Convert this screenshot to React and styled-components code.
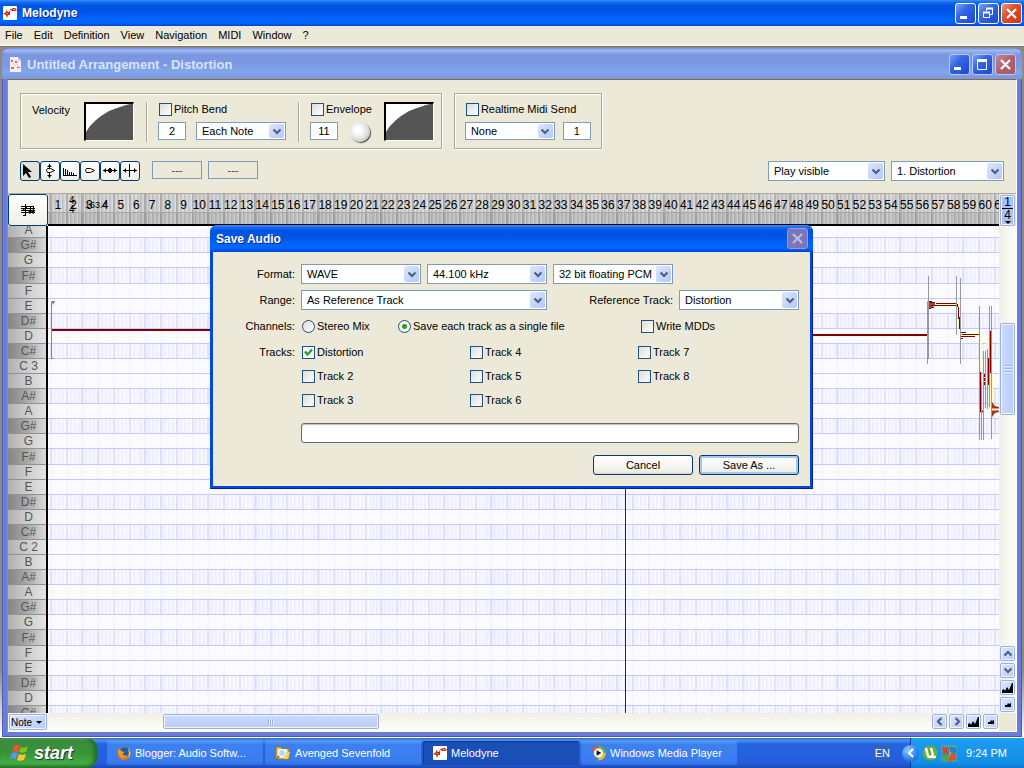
import { useState } from "react";
import styled, { createGlobalStyle, css } from "styled-components";

const NOTES = ["A", "G#", "G", "F#", "F", "E", "D#", "D", "C#", "C 3", "B", "A#", "A", "G#", "G", "F#", "F", "E", "D#", "D", "C#", "C 2", "B", "A#", "A", "G#", "G", "F#", "F", "E", "D#", "D", "C#"];
const BARS = Array.from({ length: 61 }, (_, i) => i + 1);
const MENUS = ["File", "Edit", "Definition", "View", "Navigation", "MIDI", "Window", "?"];
const TRACKS = ["Distortion", "Track 2", "Track 3", "Track 4", "Track 5", "Track 6", "Track 7", "Track 8"];

const MelodyneIcon = () => (
  <svg width="14" height="14" viewBox="0 0 14 14" aria-hidden="true">
    <rect width="14" height="14" rx="1" fill="#fff" />
    <path d="M0 8l3-2V4l2 2h2v3H5l-1 3-1-3z" fill="#c42a12" />
    <path d="M2 8l3-1v1H2z" fill="#f7c04a" />
    <path d="M6 6l2-3h1" stroke="#777" fill="none" />
    <path d="M8 4l2-2h2l2 2-2 1H9z" fill="#c42a12" />
    <path d="M10 3h2v1h-2z" fill="#f7c04a" />
  </svg>
);

const ArrangementIcon = () => (
  <svg width="13" height="17" viewBox="0 0 13 17" aria-hidden="true">
    <path d="M1 1h8l3 4v11H1z" fill="#f6edf2" />
    <path d="M9 1v4h3" fill="#d5cfe6" />
    <path d="M2 4h2v2H2zM6 5h2v2H6zM2 11h3v2H2zM8 11h3v1H8z" fill="#e0664e" />
    <path d="M4 7l2 3M8 8l1 2" stroke="#f0b8b0" />
  </svg>
);

const WindowIcon = ({ kind }) => (
  <svg width="19" height="19" viewBox="0 0 19 19" fill="none" stroke="#fff" aria-hidden="true">
    {kind === "min" && <path d="M4 13.500h7" strokeWidth="3" />}
    {kind === "max" && (
      <>
        <path d="M4.500 5v9.500h9V5" />
        <path d="M4 5.500h10" strokeWidth="3" />
      </>
    )}
    {kind === "restore" && (
      <>
        <path d="M4.500 8v5.500h6V8M7.500 7V5M13.500 5v5.500H11" />
        <path d="M4 8.500h7M7 4.500h7" strokeWidth="2" />
      </>
    )}
    {kind === "close" && <path d="M5 5l9 9M14 5l-9 9" strokeWidth="2.200" />}
  </svg>
);

const Chevron = ({ dir = "down" }) => {
  const paths = {
    down: "M1.500 2.500l3.500 3.500 3.500-3.500",
    up: "M1.500 6.500L5 3l3.500 3.500",
    left: "M6.500 1L3 4.500 6.500 8",
    right: "M3.500 1L7 4.500 3.500 8",
  };
  return (
    <svg width="10" height="9" viewBox="0 0 10 9" fill="none" stroke="#4d6185" strokeWidth="2.200" aria-hidden="true">
      <path d={paths[dir]} />
    </svg>
  );
};

const Mountain = ({ small }) => (
  <svg width="12" height="12" viewBox="0 0 12 12" aria-hidden="true">
    <path d={small ? "M3 8V6l2 0 1-2 1 1 2-1v4z" : "M0 11V8l2-1 1 2 2-4 2 3 3-7h1v10z"} fill="#000" />
  </svg>
);

const CurveIcon = () => (
  <svg width="48" height="37" viewBox="0 0 48 37" aria-hidden="true">
    <path d="M0 37V28l4-6 6-6 5-4 8-5 8-3 9-3 4-1h4v37z" fill="#555" />
  </svg>
);

const TOOLS = [
  { name: "Select", art: <path d="M3 3v12l3-3 3 5 2-1-3-5h4z" fill="#000" stroke="none" /> },
  { name: "Pitch", art: <path d="M9.500 3v4M9.500 12v5M7.500 5.500h4M7.500 14.500h4M8.500 4.500h2M8.500 15.500h2M7.500 7.500h3l4 2-4 2h-3l-1-2z" /> },
  { name: "Formant", art: <path d="M3 14.500h14M3.500 14V7M5.500 14V8M7.500 14V9M9.500 14v-3M11.500 14v-3M13.500 14v-2" /> },
  { name: "Amplitude", art: <path d="M6.500 7.500h4l4 2-4 2h-4l-1-2z" /> },
  { name: "Timing", art: <path d="M3 9.500h14M5.500 7.500v4M4.500 8.500v2M14.500 7.500v4M15.500 8.500v2M8.500 8v3M9.500 7v5M10.500 7v5M11.500 8v3" /> },
  { name: "Separate", art: <path d="M9.500 3v13M3 9.500h14M5.500 7.500v4M4.500 8.500v2M14.500 7.500v4M15.500 8.500v2" /> },
];

const ScoreIcon = () => (
  <svg width="16" height="16" viewBox="0 0 16 16" fill="none" stroke="#000" aria-hidden="true">
    <path d="M1 4.500h13M1 6.500h14M1 8.500h14M1 10.500h14" />
    <path d="M5.500 2v12M3 13.500h2M3 8l4-3M10.500 5v5M13.500 4v6" />
    <path d="M9 9h2v2H9zM12 9h2v2h-2z" fill="#000" />
  </svg>
);

const ComboBox = ({ label, value, size }) => (
  <Combo $size={size}>
    <select aria-label={label} defaultValue={value}>
      <option>{value}</option>
    </select>
    <ComboArrow>
      <Chevron />
    </ComboArrow>
  </Combo>
);

const Check = ({ children, type = "checkbox", name, checked = false }) => (
  <CheckLabel>
    <CheckInput type={type} name={name} defaultChecked={checked} />
    {children}
  </CheckLabel>
);

const WindowControls = ({ kinds, inactive }) => (
  <Controls>
    {kinds.map((kind) => (
      <ControlButton key={kind} $close={kind === "close"} $inactive={inactive} aria-label={kind}>
        <WindowIcon kind={kind} />
      </ControlButton>
    ))}
  </Controls>
);

const PitchCurve = () => (
  <PitchSvg width="951" height="487" viewBox="48 226 951 487" fill="none" aria-hidden="true">
    <path d="M625.500 226v487" stroke="#900000" />
    <path d="M55 301.500h-3.500v57H54" stroke="#888" />
    <path d="M52 302h3l-2 3z" fill="#888" />
    <path d="M52 330h160M812 335h116" stroke="#800000" strokeWidth="2" />
    <path d="M928 304.500h30l2 22M960 334.500h20M980.500 335v37M988.500 337v22M991.500 376v33h8" stroke="#ffffb8" strokeWidth="3" />
    <path d="M929 301l3 1 3 1v3l-3 1-3 2z" fill="#b04830" />
    <path d="M929 301.500h3M930 302.500h5M936 303.500h20M930 305.500h27M931 307.500h3M929 308.500h2" stroke="#800000" />
    <path d="M957.500 304v3M958.500 307v12M959.500 317v12" stroke="#800000" />
    <path d="M961 332.500h5M962 334.500h17M961 336.500h14M961 338.500h2" stroke="#800000" />
    <path d="M980.500 372v39M980 411.500h4" stroke="#800000" strokeWidth="1.500" />
    <path d="M984 375.500h5M984 379.500h5M984 383.500h5" stroke="#800000" strokeWidth="3" strokeDasharray="2 1" />
    <path d="M988.500 358v26M990.500 331v42" stroke="#800000" strokeWidth="1.500" />
    <path d="M992 402l3 4 4 1v5l-4 1-3 4z" fill="#a83020" />
    <path d="M992 409.500h7" stroke="#ffffb8" strokeWidth="2" />
    <path
      d="M928.500 276v83M927.500 301v63M956.500 276v59M960.500 278v86M979.500 306v134M981.500 382v58M983.500 351v89M985.500 351v57M987.500 349v60M989.500 306v101M991.500 306v133"
      stroke="#999"
    />
  </PitchSvg>
);

const TrackPanel = () => (
  <Panel>
    <Groups>
      <Group>
        <GroupLabel>Velocity</GroupLabel>
        <CurveBox>
          <CurveIcon />
        </CurveBox>
        <Separator />
        <Stack>
          <Check>Pitch Bend</Check>
          <StackRow>
            <NumberInput aria-label="Bend range" defaultValue="2" />
            <ComboBox label="Bend mode" value="Each Note" size="small" />
          </StackRow>
        </Stack>
        <Separator />
        <Stack>
          <Check>Envelope</Check>
          <StackRow>
            <NumberInput aria-label="Envelope amount" defaultValue="11" />
            <Knob aria-label="Envelope knob" />
          </StackRow>
        </Stack>
        <CurveBox>
          <CurveIcon />
        </CurveBox>
      </Group>
      <Group>
        <Stack>
          <Check>Realtime Midi Send</Check>
          <StackRow $tight>
            <ComboBox label="Midi output" value="None" size="small" />
            <NumberInput aria-label="Midi channel" defaultValue="1" />
          </StackRow>
        </Stack>
      </Group>
    </Groups>
    <ToolRow>
      <Tools>
        {TOOLS.map(({ name, art }, i) => (
          <ToolButton key={name} aria-label={name} $pressed={i === 0}>
            <svg width="20" height="20" viewBox="0 0 20 20" fill="none" stroke="#000" aria-hidden="true">
              {art}
            </svg>
          </ToolButton>
        ))}
      </Tools>
      <ValueInput aria-label="Note pitch" defaultValue="---" disabled />
      <ValueInput aria-label="Note offset" defaultValue="---" disabled />
      <Spacer />
      <ComboBox label="Playback" value="Play visible" size="playback" />
      <ComboBox label="Track" value="1. Distortion" size="track" />
    </ToolRow>
  </Panel>
);

const Editor = () => (
  <EditorGrid>
    <RulerRow>
      <ScoreButton aria-label="Score view">
        <ScoreIcon />
      </ScoreButton>
      <Ruler>
        {BARS.map((bar) => (
          <Bar key={bar}>{bar}</Bar>
        ))}
        <Meter>
          <span>4</span>
          <span>4</span>
        </Meter>
        <Tempo>163.4</Tempo>
      </Ruler>
      <GridButton aria-label="Grid size">
        <span>1</span>
        <span>4</span>
        <TinyArrow />
      </GridButton>
    </RulerRow>
    <RollRow>
      <Keys>
        {NOTES.map((note, i) => (
          <Key key={i} $sharp={note.endsWith("#")} $tall={note === "F#"} $first={i === 0}>
            {note}
          </Key>
        ))}
      </Keys>
      <Roll>
        {NOTES.map((note, i) => (
          <Lane key={i} $sharp={note.endsWith("#")} $tall={note === "F#"} $first={i === 0} />
        ))}
        <PitchCurve />
      </Roll>
      <VerticalBar>
        <VerticalTrack>
          <VerticalThumb />
        </VerticalTrack>
        <ScrollButton aria-label="Scroll up">
          <Chevron dir="up" />
        </ScrollButton>
        <ScrollButton aria-label="Scroll down">
          <Chevron />
        </ScrollButton>
        <ScrollButton aria-label="Zoom in vertically">
          <Mountain />
        </ScrollButton>
        <ScrollButton aria-label="Zoom out vertically">
          <Mountain small />
        </ScrollButton>
      </VerticalBar>
    </RollRow>
    <BottomBar>
      <NoteButton>
        Note
        <TinyArrow />
      </NoteButton>
      <HorizontalTrack>
        <HorizontalThumb />
      </HorizontalTrack>
      <ScrollButton aria-label="Scroll left">
        <Chevron dir="left" />
      </ScrollButton>
      <ScrollButton aria-label="Scroll right">
        <Chevron dir="right" />
      </ScrollButton>
      <ScrollButton aria-label="Zoom in">
        <Mountain />
      </ScrollButton>
      <ScrollButton aria-label="Zoom out">
        <Mountain small />
      </ScrollButton>
      <Corner />
    </BottomBar>
  </EditorGrid>
);

const SaveDialog = ({ onClose }) => (
  <Overlay>
    <Dialog role="dialog" aria-label="Save Audio">
      <DialogTitle>
        <TitleText>Save Audio</TitleText>
        <Controls>
          <ControlButton $disabled aria-label="close" onClick={onClose}>
            <WindowIcon kind="close" />
          </ControlButton>
        </Controls>
      </DialogTitle>
      <DialogBody>
        <FormRow>
          <FormLabel>Format:</FormLabel>
          <Fields>
            <ComboBox label="Format" value="WAVE" size="medium" />
            <ComboBox label="Sample rate" value="44.100 kHz" size="medium" />
            <ComboBox label="Bit depth" value="32 bit floating PCM" size="medium" />
          </Fields>
        </FormRow>
        <FormRow>
          <FormLabel>Range:</FormLabel>
          <Fields>
            <ComboBox label="Range" value="As Reference Track" size="large" />
            <Spacer />
            <FormLabel>Reference Track:</FormLabel>
            <ComboBox label="Reference Track" value="Distortion" size="medium" />
          </Fields>
        </FormRow>
        <FormRow>
          <FormLabel>Channels:</FormLabel>
          <Channels>
            <Check type="radio" name="channels">
              Stereo Mix
            </Check>
            <Check type="radio" name="channels" checked>
              Save each track as a single file
            </Check>
            <Check>Write MDDs</Check>
          </Channels>
        </FormRow>
        <FormRow>
          <FormLabel>Tracks:</FormLabel>
          <TrackList>
            {TRACKS.map((track, i) => (
              <Check key={track} checked={i === 0}>
                {track}
              </Check>
            ))}
          </TrackList>
        </FormRow>
        <Progress role="progressbar" aria-label="Progress" />
        <Actions>
          <DialogButton onClick={onClose}>Cancel</DialogButton>
          <DialogButton $primary>Save As ...</DialogButton>
        </Actions>
      </DialogBody>
    </Dialog>
  </Overlay>
);

const Firefox = () => (
  <svg width="14" height="15" viewBox="0 0 15 15" aria-hidden="true">
    <circle cx="7.500" cy="7.500" r="7" fill="#e8701a" />
    <circle cx="8" cy="5.800" r="5" fill="#1b5fa8" />
    <path d="M1 3c2 0 3 1 4 2l3 1-2 2c1 2 3 2 5 1-2 4-7 4-9 0C1 7 1 5 1 3z" fill="#f49a1f" />
    <path d="M12 2c3 3 3 8 0 10 1-3 1-6 0-10z" fill="#ffc93c" />
  </svg>
);

const Folder = () => (
  <svg width="16" height="14" viewBox="0 0 16 14" aria-hidden="true">
    <path d="M1 1h5l1 2h7v10H1z" fill="#f3c64b" stroke="#a77415" />
    <path d="M3 3h9v9H3z" fill="#fff7d5" />
    <path d="M8 8l2-2h5l-2 7H9z" fill="#ffcf5c" />
    <circle cx="7" cy="7" r="3.500" fill="#a9dcf5" stroke="#fff" />
    <path d="M4 10l-2 3" stroke="#a77415" strokeWidth="2" />
  </svg>
);

const MediaPlayer = () => (
  <svg width="15" height="16" viewBox="0 0 16 16" aria-hidden="true">
    <path d="M8 0a8 8 0 0 0-7 5l7 3z" fill="#e8541c" />
    <path d="M8 0a8 8 0 0 1 8 8H8z" fill="#5bb536" />
    <path d="M1 5a8 8 0 0 0 7 11V8z" fill="#3d83dd" />
    <path d="M16 8a8 8 0 0 1-8 8V8z" fill="#f5b51d" />
    <circle cx="8" cy="8" r="5" fill="#f5f5f5" />
    <path d="M6 5l5 3-5 3z" fill="#111" />
  </svg>
);

const WindowsFlag = () => (
  <svg width="19" height="18" viewBox="0 0 19 18" aria-hidden="true">
    <path d="M4 2c2-2 4-1 6 0L8 8C6 7 4 7 2 8z" fill="#f0562b" />
    <path d="M11 3c2 1 4 1 7-1l-2 6c-3 1-5 1-7 0z" fill="#7fc41c" />
    <path d="M2 9c2-1 4-1 6 0l-2 6c-2-1-4-1-6 0z" fill="#5b92f5" />
    <path d="M9 10c2 1 4 1 7 0l-2 6c-3 1-5 1-7 0z" fill="#fcc62e" />
  </svg>
);

const Utorrent = () => (
  <svg width="16" height="16" viewBox="0 0 16 16" aria-hidden="true">
    <circle cx="8" cy="8" r="7.500" fill="#69ad3c" />
    <path d="M4 3l2 8c1 2 4 1 4-1l1 2h3M9 3l2 7" fill="none" stroke="#fff" strokeWidth="2.400" />
  </svg>
);

const Shield = () => (
  <svg width="16" height="17" viewBox="0 0 16 17" aria-hidden="true">
    <rect x="1" y="1" width="14" height="15" fill="none" stroke="#c8b84a" strokeDasharray="1 1" />
    <path d="M1 2l6 1 1 5-6 1z" fill="#d9432b" />
    <path d="M9 2l6 1v5l-6-1z" fill="#2a7ec7" />
    <path d="M1 10l6-1 1 6-6 1z" fill="#52a33b" />
    <path d="M9 8l6 1-1 6-5 1z" fill="#e2521e" />
    <path d="M7 3l2 5-2 6 3-6z" fill="#f6c33c" />
  </svg>
);

const TASKS = [
  { title: "Blogger: Audio Softw...", icon: <Firefox /> },
  { title: "Avenged Sevenfold", icon: <Folder /> },
  { title: "Melodyne", icon: <MelodyneIcon />, active: true },
  { title: "Windows Media Player", icon: <MediaPlayer /> },
];

const App = () => {
  const [dialogOpen, setDialogOpen] = useState(true);

  return (
    <Screen>
      <GlobalStyle />
      <AppTitle>
        <MelodyneIcon />
        <TitleText>Melodyne</TitleText>
        <WindowControls kinds={["min", "restore", "close"]} />
      </AppTitle>
      <MenuBar>
        {MENUS.map((menu) => (
          <MenuButton key={menu}>{menu}</MenuButton>
        ))}
      </MenuBar>
      <Workspace>
        <ChildWindow>
          <ChildTitle>
            <ArrangementIcon />
            <TitleText $large>Untitled Arrangement - Distortion</TitleText>
            <WindowControls kinds={["min", "max", "close"]} inactive />
          </ChildTitle>
          <ChildBody>
            <TrackPanel />
            <Editor />
          </ChildBody>
        </ChildWindow>
      </Workspace>
      <TaskBar>
        <StartButton>
          <WindowsFlag />
          start
        </StartButton>
        {TASKS.map(({ title, icon, active }) => (
          <Task key={title} $active={active}>
            {icon}
            {title}
          </Task>
        ))}
        <Spacer />
        <Language>EN</Language>
        <Tray>
          <TrayToggle aria-label="Show hidden icons">
            <svg width="8" height="10" viewBox="0 0 8 10" fill="none" stroke="#fff" strokeWidth="2">
              <path d="M6 1L2 5l4 4" />
            </svg>
          </TrayToggle>
          <Utorrent />
          <Shield />
          <Clock>9:24 PM</Clock>
        </Tray>
      </TaskBar>
      {dialogOpen && <SaveDialog onClose={() => setDialogOpen(false)} />}
    </Screen>
  );
};

export default App;

const GlobalStyle = createGlobalStyle`
  * {
    box-sizing: border-box;
  }

  body {
    margin: 0;
    overflow: hidden;
  }

  body, button, input, select {
    font-family: "Liberation Sans", Arial, sans-serif;
    font-size: 11px;
    color: #000;
  }

  button {
    padding: 0;
    border: 0;
    background: none;
  }

  svg {
    flex: none;
    display: block;
  }
`;

const Screen = styled.div`
  position: relative;
  display: flex;
  flex-direction: column;
  height: 100vh;
  background: #ece9d8;
`;

const activeTitle = css`
  background: linear-gradient(#3a8ffb 0, #1670f5 8%, #0054e3 20%, #0055e5 45%, #0066ff 75%, #0063fb 88%, #0044d0 100%);
`;

const AppTitle = styled.header`
  flex: none;
  display: flex;
  align-items: center;
  gap: 5px;
  height: 26px;
  padding: 0 2px 0 3px;
  ${activeTitle}
`;

const TitleText = styled.span`
  font-size: ${({ $large }) => ($large ? 13 : 12)}px;
  font-weight: 700;
  color: ${({ $large }) => ($large ? "#d8e4fb" : "#fff")};
  text-shadow: ${({ $large }) => ($large ? "none" : "1px 1px 0 #0a2a8c")};
  white-space: nowrap;
`;

const Controls = styled.div`
  display: flex;
  gap: 2px;
  margin-left: auto;
`;

const ControlButton = styled.button`
  width: 21px;
  height: 21px;
  border: 1px solid ${({ $inactive }) => ($inactive ? "#b5c8f4" : "#fff")};
  border-radius: 3px;
  background: ${({ $close }) =>
    $close ? "linear-gradient(135deg, #f0997c, #e0502c 40%, #c83810)" : "linear-gradient(135deg, #7ba0f8, #3565e6 40%, #1c49cf)"};

  ${({ $inactive, $close }) =>
    $inactive && $close && "background: linear-gradient(135deg, #c08a9c, #b0606c 50%, #a85a62);"}

  ${({ $disabled }) =>
    $disabled &&
    css`
      border-color: #9a9bd8;
      background: #7a76bb;

      svg {
        opacity: 0.5;
      }
    `}
`;

const MenuBar = styled.nav`
  flex: none;
  display: flex;
  align-items: center;
  gap: 11px;
  height: 20px;
  padding: 0 5px 2px;
  border-bottom: 1px solid #fff;
`;

const MenuButton = styled.button`
  line-height: 16px;
`;

const Workspace = styled.main`
  flex: 1;
  display: flex;
  min-height: 0;
  padding: 1px 2px 1px;
  border-top: 1px solid #716f64;
  background: linear-gradient(#8d8a80 90%, #fff);
`;

const ChildWindow = styled.section`
  flex: 1;
  display: flex;
  flex-direction: column;
  min-width: 0;
  padding: 0 5px 5px;
  border-radius: 7px 7px 0 0;
  background: #6b7bd9;
  box-shadow: inset 1px 0 #5060b8, inset -1px 0 #4858b0, inset 0 -1px #4858b0;
`;

const ChildTitle = styled.header`
  flex: none;
  display: flex;
  align-items: center;
  gap: 5px;
  height: 31px;
  margin: 0 -5px;
  padding: 2px 6px 0 7px;
  border-radius: 7px 7px 0 0;
  background: linear-gradient(#6f8fe0 0, #a0b8f0 8%, #7b96e0 22%, #7b98e2 50%, #82a6ea 78%, #7c9ae2 92%, #8a96d0 100%);
`;

const ChildBody = styled.div`
  flex: 1;
  display: flex;
  flex-direction: column;
  min-height: 0;
  border: 1px solid #fff;
  border-top-color: #716f64;
  border-left-color: #8f8c80;
  background: #ece9d8;
`;

const Panel = styled.div`
  padding: 13px 12px 12px;
`;

const Groups = styled.div`
  display: flex;
  gap: 12px;
`;

const Group = styled.div`
  display: flex;
  gap: 12px;
  height: 56px;
  padding: 8px 7px 0 11px;
  border: 1px solid #aca899;
  box-shadow: 1px 1px #fff, inset 1px 1px #fff;

  &:last-child {
    padding: 8px 10px 0;
  }
`;

const GroupLabel = styled.span`
  width: 40px;
  line-height: 16px;
`;

const CurveBox = styled.div`
  width: 50px;
  height: 39px;
  border: 1px solid #fff;
  border-top: 2px solid #000;
  border-left: 2px solid #000;
  background: #fff;
  overflow: hidden;
`;

const Separator = styled.div`
  width: 2px;
  height: 40px;
  margin-right: -2px;
  border-left: 1px solid #aca899;
  border-right: 1px solid #fff;
`;

const Stack = styled.div`
  display: flex;
  flex-direction: column;
  gap: 6px;
`;

const StackRow = styled.div`
  display: flex;
  gap: ${({ $tight }) => ($tight ? 8 : 10)}px;
`;

const NumberInput = styled.input`
  width: 28px;
  height: 18px;
  padding: 0;
  border: 1px solid #7f9db9;
  background: #fff;
  text-align: center;
`;

const Knob = styled.button`
  width: 20px;
  height: 20px;
  margin-left: 2px;
  border-radius: 50%;
  background: radial-gradient(circle at 40% 40%, #fff 15%, #dcdcdc 60%, #8c8c8c);
  box-shadow: 1px 1px 1px #444;
`;

const CheckLabel = styled.label`
  display: flex;
  align-items: center;
  gap: 2px;
  height: 14px;
  padding-left: 1px;
  white-space: nowrap;
`;

const CheckInput = styled.input`
  appearance: none;
  flex: none;
  width: 13px;
  height: 13px;
  margin: 0;
  border: 1px solid #1c5180;
  background: linear-gradient(135deg, #dcdcd7, #fff);

  &[type="radio"] {
    border-radius: 50%;
  }

  &[type="radio"]:checked {
    background: radial-gradient(circle, #21a121 0 2px, #f6f6f4 3px);
  }

  &[type="checkbox"]:checked {
    background: #f6f6f4
      url("data:image/svg+xml,%3Csvg xmlns='http://www.w3.org/2000/svg' viewBox='0 0 11 11'%3E%3Cpath d='M2 4.500l2.500 3L9 2.500' fill='none' stroke='%2321a121' stroke-width='2.200'/%3E%3C/svg%3E");
  }
`;

const COMBO_WIDTHS = { small: 90, medium: 120, large: 246, playback: 117, track: 113 };

const Combo = styled.div`
  position: relative;
  flex: none;
  width: ${({ $size }) => COMBO_WIDTHS[$size]}px;
  height: ${({ $size }) => ($size === "small" ? 18 : 20)}px;

  select {
    appearance: none;
    display: block;
    width: 100%;
    height: 100%;
    padding: 0 17px 0 5px;
    border: 1px solid #7f9db9;
    border-radius: 0;
    background: #fff;
  }
`;

const ComboArrow = styled.span`
  position: absolute;
  top: 2px;
  right: 2px;
  bottom: 2px;
  width: 15px;
  display: flex;
  align-items: center;
  justify-content: center;
  border-radius: 2px;
  background: linear-gradient(135deg, #dce6fe, #b4c8f6);
  pointer-events: none;
`;

const ToolRow = styled.div`
  display: flex;
  gap: 6px;
  height: 20px;
  margin-top: 12px;
`;

const Tools = styled.div`
  display: flex;
  margin-right: 6px;
`;

const ToolButton = styled.button`
  display: flex;
  align-items: center;
  justify-content: center;
  width: 20px;
  height: 20px;
  border: 1px solid #003c74;
  border-radius: 3px;
  background: ${({ $pressed }) => ($pressed ? "#e2e1d8" : "linear-gradient(#fff, #f0efe8)")};
`;

const ValueInput = styled.input`
  width: 50px;
  height: 18px;
  padding: 0;
  border: 1px solid #7f9db9;
  background: #ece9d8;
  color: #444;
  text-align: center;
`;

const Spacer = styled.div`
  flex: 1;
`;

const EditorGrid = styled.div`
  flex: 1;
  display: flex;
  flex-direction: column;
  min-height: 0;
`;

const RulerRow = styled.div`
  flex: none;
  display: flex;
  height: 33px;
  border-top: 1px solid #aca899;
`;

const ScoreButton = styled.button`
  flex: none;
  display: flex;
  align-items: center;
  justify-content: center;
  width: 40px;
  height: 32px;
  border: 1px solid #003c74;
  border-radius: 3px;
  background: linear-gradient(#fff, #f0efe8);
`;

/* one bar is 3/181 of the ruler and of the lanes, with four beats in it */
const BAR_SHARE = "calc(100% * 3 / 181)";
const BEAT_SHARE = "calc(100% * 3 / 724)";

const Ruler = styled.div`
  position: relative;
  flex: 1;
  display: flex;
  min-width: 0;
  padding-left: 2px;
  overflow: hidden;
  border-bottom: 2px solid #000;
  background: linear-gradient(transparent 18px, #a8a8a8 18px 19px, rgba(0, 0, 0, 0.08) 19px),
    repeating-linear-gradient(90deg, rgba(90, 90, 90, 0.2) 0 2px, transparent 3px ${BAR_SHARE}),
    repeating-linear-gradient(90deg, #bababa 0, #dfdfdf ${BEAT_SHARE});
  background-origin: content-box;
`;

const Bar = styled.span`
  flex: 0 0 ${BAR_SHARE};
  display: flex;
  justify-content: center;
  font-size: 12px;
  line-height: 22px;
`;

const Meter = styled.span`
  position: absolute;
  top: 2px;
  left: 21px;
  display: flex;
  flex-direction: column;
  font-size: 10px;
  line-height: 9px;
`;

const Tempo = styled.span`
  position: absolute;
  top: 5px;
  left: 37px;
  font-size: 9px;
  line-height: 12px;
`;

const blueButton = css`
  border: 1px solid #98b0e8;
  border-radius: 2px;
  background: linear-gradient(135deg, #dbe5fe, #b9cdf9);
  box-shadow: inset 0 0 0 1px #f0f4ff;
`;

const GridButton = styled.button`
  flex: none;
  display: flex;
  flex-direction: column;
  align-items: center;
  width: 15px;
  height: 31px;
  margin: 1px 1px 0;
  font-size: 12px;
  line-height: 12px;
  ${blueButton}
  background: #a9c0f4;

  span:first-child {
    width: 11px;
    border-bottom: 1px solid #000;
  }
`;

const TinyArrow = styled.i`
  border: 3px solid transparent;
  border-top-color: #000;
  border-bottom: 0;
`;

const RollRow = styled.div`
  flex: 1;
  display: flex;
  min-height: 0;
`;

const Keys = styled.div`
  flex: none;
  width: 40px;
  overflow: hidden;
  border-right: 2px solid #000;
`;

const rowHeight = css`
  height: ${({ $tall, $first }) => ($first ? 12 : $tall ? 16 : 15)}px;
`;

const Key = styled.div`
  ${rowHeight}
  display: flex;
  align-items: flex-end;
  justify-content: center;
  padding-left: 3px;
  overflow: hidden;
  border-bottom: 1px solid #929292;
  background: ${({ $sharp }) =>
    $sharp ? "linear-gradient(90deg, #858585, #a4a4a4 45%, #dadada)" : "linear-gradient(90deg, #b0b0b0, #c8c8c8 40%, #e4e4e4)"};
  color: #555;
  font-size: 12px;
  line-height: 14px;
`;

const Roll = styled.div`
  position: relative;
  flex: 1;
  min-width: 0;
  overflow: hidden;
  background: #fdfdff;
`;

const Lane = styled.div`
  ${rowHeight}
  padding-left: 2px;
  border-bottom: 1px solid #c8c8fa;
  background-clip: content-box;
  background-origin: content-box;
  background-image: repeating-linear-gradient(
      90deg,
      rgba(110, 110, 240, ${({ $sharp }) => ($sharp ? 0.11 : 0.03)}) 0 2px,
      transparent 3px ${BAR_SHARE}
    ),
    repeating-linear-gradient(
      90deg,
      rgba(130, 130, 255, ${({ $sharp }) => ($sharp ? 0.15 : 0.02)}) 0,
      rgba(130, 130, 255, 0.01) ${BEAT_SHARE}
    );
`;

const PitchSvg = styled.svg`
  position: absolute;
  top: 0;
  left: 0;
`;

const VerticalBar = styled.div`
  flex: none;
  display: flex;
  flex-direction: column;
  width: 17px;
  background: linear-gradient(90deg, #f0efe6, #fefefb);
`;

const VerticalTrack = styled.div`
  flex: 1;
`;

const thumbLines = (angle) => `linear-gradient(${angle}, #98b0e8 50%, #eef3ff 50%)`;

const VerticalThumb = styled.div`
  width: 15px;
  height: 22%;
  margin: 97px 1px 0;
  ${blueButton}
  background: ${thumbLines("180deg")} center / 6px 2px no-repeat, ${thumbLines("180deg")} center 47% / 6px 2px no-repeat,
    ${thumbLines("180deg")} center 53% / 6px 2px no-repeat, linear-gradient(90deg, #cbdafd, #b9cdfb);
`;

const ScrollButton = styled.button`
  flex: none;
  display: flex;
  align-items: center;
  justify-content: center;
  width: 15px;
  height: 15px;
  margin: 1px;
  ${blueButton}
`;

const BottomBar = styled.div`
  flex: none;
  display: flex;
  height: 18px;
  background: linear-gradient(#f0efe6, #fefefb);
`;

const NoteButton = styled.button`
  flex: none;
  display: flex;
  align-items: center;
  justify-content: space-between;
  width: 38px;
  height: 16px;
  margin: 1px;
  padding: 0 4px 0 1px;
  font-size: 10px;
  ${blueButton}
`;

const HorizontalTrack = styled.div`
  flex: 1;
`;

const HorizontalThumb = styled.div`
  width: calc(100% * 22 / 90);
  height: 15px;
  margin: 1px 0 0 13%;
  ${blueButton}
  background: ${thumbLines("90deg")} center / 2px 6px no-repeat, ${thumbLines("90deg")} 49% center / 2px 6px no-repeat,
    ${thumbLines("90deg")} 51% center / 2px 6px no-repeat, linear-gradient(#cbdafd, #b9cdfb);
`;

const Corner = styled.div`
  width: 17px;
  background: #ece9d8;
`;

const Overlay = styled.div`
  position: absolute;
  inset: 0;
  display: flex;
  justify-content: center;
  align-items: flex-start;
  padding: 225px 1px 0 0;
`;

const Dialog = styled.div`
  width: 603px;
  border-radius: 7px 7px 0 0;
  background: #0048e0;
  box-shadow: inset -1px -1px #001ea0;
  padding: 0 3px 3px;
`;

const DialogTitle = styled.header`
  display: flex;
  align-items: center;
  height: 27px;
  margin: 0 -3px;
  padding: 0 5px 0 6px;
  border-radius: 7px 7px 0 0;
  ${activeTitle}
`;

const DialogBody = styled.div`
  display: flex;
  flex-direction: column;
  gap: 6px;
  padding: 12px 11px 11px 0;
  background: #ece9d8;
`;

const FormRow = styled.div`
  display: grid;
  grid-template-columns: 82px 1fr;
  gap: 6px;
`;

const FormLabel = styled.span`
  line-height: 20px;
  text-align: right;
  white-space: nowrap;
`;

const Fields = styled.div`
  display: flex;
  gap: 6px;
`;

const Channels = styled.div`
  display: grid;
  grid-template-columns: 96px 243px 1fr;
  align-items: center;
`;

const TrackList = styled.div`
  display: grid;
  grid-template-rows: repeat(3, 20px);
  grid-auto-columns: 168px;
  grid-auto-flow: column;
  row-gap: 4px;
  align-items: center;
`;

const Progress = styled.div`
  height: 20px;
  margin: 7px 0 0 88px;
  border: 1px solid #686868;
  border-radius: 3px;
  background: #fff;
  box-shadow: inset 0 1px 1px #bebebe;
`;

const Actions = styled.div`
  display: flex;
  justify-content: flex-end;
  gap: 6px;
  margin-top: 6px;
`;

const DialogButton = styled.button`
  width: 100px;
  height: 20px;
  border: 1px solid #003c74;
  border-radius: 3px;
  background: linear-gradient(#fff, #f0f0ea 85%, #d8d3c8);
  box-shadow: ${({ $primary }) => ($primary ? "inset 0 0 0 2px #a8c4f0" : "none")};
`;

const TaskBar = styled.footer`
  flex: none;
  display: flex;
  align-items: center;
  height: 30px;
  background: linear-gradient(#3168d5 0, #4993e6 8%, #2663e0 20%, #245ddb 85%, #1c48b5 100%);
  color: #fff;
`;

const StartButton = styled.button`
  display: flex;
  align-items: center;
  gap: 5px;
  width: 97px;
  height: 30px;
  margin-right: 10px;
  padding-left: 10px;
  border-radius: 0 10px 10px 0;
  background: linear-gradient(#5fae5f 0, #3c8c3c 12%, #389338 50%, #45ac45 85%, #2c7a2c);
  box-shadow: inset -3px 0 4px #1f6a1f;
  color: #fff;
  font-size: 18px;
  font-style: italic;
  font-weight: 700;
  text-shadow: 1px 1px 1px #234;
`;

const Task = styled.button`
  display: flex;
  align-items: center;
  gap: 4px;
  width: 156px;
  height: 24px;
  margin-right: 2px;
  padding-left: 10px;
  border-radius: 2px;
  background: ${({ $active }) => ($active ? "#1b4fb8" : "linear-gradient(#5a9af8, #3c80f0 15%, #3a7df0 85%, #3070e0)")};
  box-shadow: ${({ $active }) => ($active ? "inset 1px 1px 1px #0f3588" : "none")};
  color: #fff;
  white-space: nowrap;
`;

const Language = styled.span`
  margin-right: 18px;
  padding: 0 2px;
  background: #2f62c0;
  line-height: 16px;
`;

const Tray = styled.div`
  display: flex;
  align-items: center;
  gap: 3px;
  height: 30px;
  padding-right: 17px;
  border-left: 1px solid #10389a;
  background: linear-gradient(#18a8f0 0, #1b9af0 12%, #1290e8 80%, #0d78d0);
`;

const TrayToggle = styled.button`
  display: flex;
  align-items: center;
  justify-content: center;
  width: 17px;
  height: 17px;
  margin-left: -9px;
  border-radius: 50%;
  background: radial-gradient(circle at 35% 30%, #8cc8ff, #2a80e8 60%, #1458c0);
`;

const Clock = styled.span`
  margin-left: 6px;
`;
